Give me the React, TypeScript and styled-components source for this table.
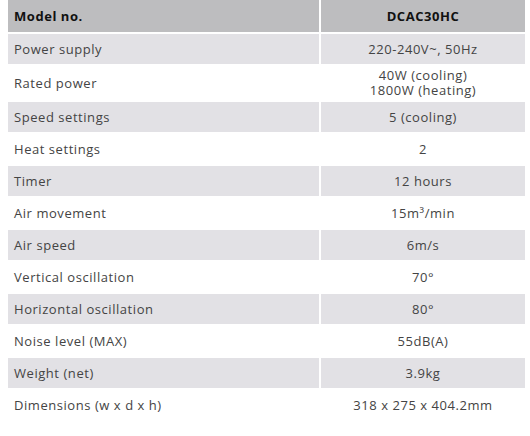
import { Fragment } from 'react'
import styled, { createGlobalStyle } from 'styled-components'

const GlobalStyle = createGlobalStyle`
  html, body {
    margin: 0;
    padding: 0;
    background: #ffffff;
  }
  body {
    font-family: 'Open Sans', 'Liberation Sans', sans-serif;
  }
`

const SpecTable = styled.div`
  margin-left: 8px;
  width: 517px;
  display: grid;
  grid-template-columns: 311px 204px;
  column-gap: 2px;
  row-gap: 2px;
`

const Cell = styled.div<{ $tone: 'head' | 'stripe' | 'plain'; $tall?: boolean; $value?: boolean }>`
  height: ${p => (p.$tone === 'head' ? 32 : p.$tall ? 34 : 30)}px;
  display: flex;
  flex-direction: column;
  justify-content: center;
  align-items: ${p => (p.$value ? 'center' : 'flex-start')};
  text-align: ${p => (p.$value ? 'center' : 'left')};
  padding-left: ${p => (p.$value ? 0 : 6)}px;
  box-sizing: border-box;
  background: ${p => (p.$tone === 'head' ? '#bdbdbf' : p.$tone === 'stripe' ? '#e2e1e5' : '#ffffff')};
  color: ${p => (p.$tone === 'head' ? '#111111' : '#444444')};
  font-size: 13px;
  letter-spacing: 0.55px;
  font-weight: ${p => (p.$tone === 'head' ? 700 : 400)};
  line-height: 15px;
`

const Line = styled.span`
  display: block;
  line-height: 15px;
`

const rows: { label: string; value: string[] }[] = [
  { label: 'Power supply', value: ['220-240V~, 50Hz'] },
  { label: 'Rated power', value: ['40W (cooling)', '1800W (heating)'] },
  { label: 'Speed settings', value: ['5 (cooling)'] },
  { label: 'Heat settings', value: ['2'] },
  { label: 'Timer', value: ['12 hours'] },
  { label: 'Air movement', value: ['15m³/min'] },
  { label: 'Air speed', value: ['6m/s'] },
  { label: 'Vertical oscillation', value: ['70°'] },
  { label: 'Horizontal oscillation', value: ['80°'] },
  { label: 'Noise level (MAX)', value: ['55dB(A)'] },
  { label: 'Weight (net)', value: ['3.9kg'] },
  { label: 'Dimensions (w x d x h)', value: ['318 x 275 x 404.2mm'] },
]

export default function App() {
  return (
    <>
      <GlobalStyle />
      <SpecTable>
        <Cell $tone='head'>Model no.</Cell>
        <Cell $tone='head' $value>DCAC30HC</Cell>
        {rows.map((row, i) => {
          const tone = i % 2 === 0 ? 'stripe' : 'plain'
          const tall = row.value.length > 1
          return (
            <Fragment key={row.label}>
              <Cell $tone={tone} $tall={tall}>{row.label}</Cell>
              <Cell $tone={tone} $tall={tall} $value>
                {row.value.map(line => <Line key={line}>{line}</Line>)}
              </Cell>
            </Fragment>
          )
        })}
      </SpecTable>
    </>
  )
}
